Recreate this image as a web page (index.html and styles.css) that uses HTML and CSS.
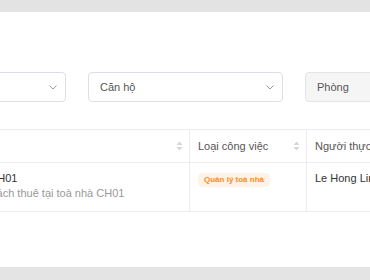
FILE: index.html
```html
<!DOCTYPE html>
<html lang="vi">
<head>
<meta charset="utf-8">
<link rel="stylesheet" href="styles.css">
</head>
<body>
<div class="topbar"></div>
<div class="panel">
  <div class="filters">
    <div class="select"><span class="val"></span><svg class="chev" width="8" height="5" viewBox="0 0 8 5"><path d="M0.5 0.5 L4 4 L7.5 0.5" fill="none" stroke="#9a9a9a" stroke-width="1"/></svg></div>
    <div class="select"><span class="val">Căn hộ</span><svg class="chev" width="8" height="5" viewBox="0 0 8 5"><path d="M0.5 0.5 L4 4 L7.5 0.5" fill="none" stroke="#9a9a9a" stroke-width="1"/></svg></div>
    <div class="select disabled"><span class="val">Phòng</span></div>
  </div>
  <div class="table">
    <div class="row head">
      <div class="cell"><span></span><svg class="sort" width="7" height="10" viewBox="0 0 7 10"><path d="M3.5 0.5 L6.5 4 L0.5 4 Z M3.5 9.5 L6.5 6 L0.5 6 Z" fill="#d3d6dc"/></svg></div>
      <div class="cell"><span>Loại công việc</span><svg class="sort" width="7" height="10" viewBox="0 0 7 10"><path d="M3.5 0.5 L6.5 4 L0.5 4 Z M3.5 9.5 L6.5 6 L0.5 6 Z" fill="#d3d6dc"/></svg></div>
      <div class="cell"><span>Người thực hiện</span></div>
    </div>
    <div class="row body">
      <div class="cell">
        <div class="title">Toà nhà: CH01</div>
        <div class="desc">Quản lý khách thuê tại toà nhà CH01</div>
      </div>
      <div class="cell"><span class="tag">Quản lý toà nhà</span></div>
      <div class="cell"><div class="title">Le Hong Linh</div></div>
    </div>
  </div>
</div>
<div class="bottombar"></div>
</body>
</html>
```
FILE: styles.css
```css
html, body {
  margin: 0;
  padding: 0;
}
body {
  background: #e5e5e5;
  font-family: "Liberation Sans", Arial, sans-serif;
  font-size: 11px;
  overflow: hidden;
  width: 370px;
  height: 280px;
}
.topbar {
  height: 12px;
  background: #e3e3e3;
}
.panel {
  background: #fff;
  height: 255px;
  overflow: hidden;
}
.filters {
  display: flex;
  gap: 22px;
  margin-top: 60px;
  margin-left: -129px;
}
.select {
  flex: 0 0 auto;
  box-sizing: border-box;
  width: 195px;
  height: 30px;
  border: 1px solid #dcdfe6;
  border-radius: 4px;
  display: flex;
  align-items: center;
  justify-content: space-between;
  padding: 0 8px 0 11px;
  color: #555;
  background: #fff;
}
.select.disabled {
  background: #f5f5f6;
  border-color: #e2e4e8;
}
.chev {
  display: block;
  margin-top: 1px;
}
.table {
  margin-top: 27px;
  margin-left: -64px;
  border-top: 1px solid #ebedf3;
}
.row {
  display: grid;
  grid-template-columns: 254px 117px 200px;
}
.cell {
  box-sizing: border-box;
  border-right: 1px solid #ebedf3;
  border-bottom: 1px solid #ebedf3;
  padding: 0 8px 0 8px;
}
.head .cell {
  height: 33px;
  display: flex;
  align-items: center;
  justify-content: space-between;
  color: #555;
  padding-right: 6px;
  padding-bottom: 1px;
}
.sort {
  display: block;
}
.body .cell {
  height: 49px;
  padding-top: 8px;
  line-height: 15px;
}
.title {
  color: #333;
}
.desc {
  color: #999;
}
.tag {
  display: inline-block;
  margin-top: 2px;
  height: 14px;
  line-height: 14px;
  padding: 0 6px;
  border-radius: 4px;
  background: #fff2e6;
  color: #fa8c28;
  font-size: 8px;
  font-weight: bold;
  vertical-align: top;
}
.bottombar {
  height: 13px;
  background: #e4e4e4;
}
```
